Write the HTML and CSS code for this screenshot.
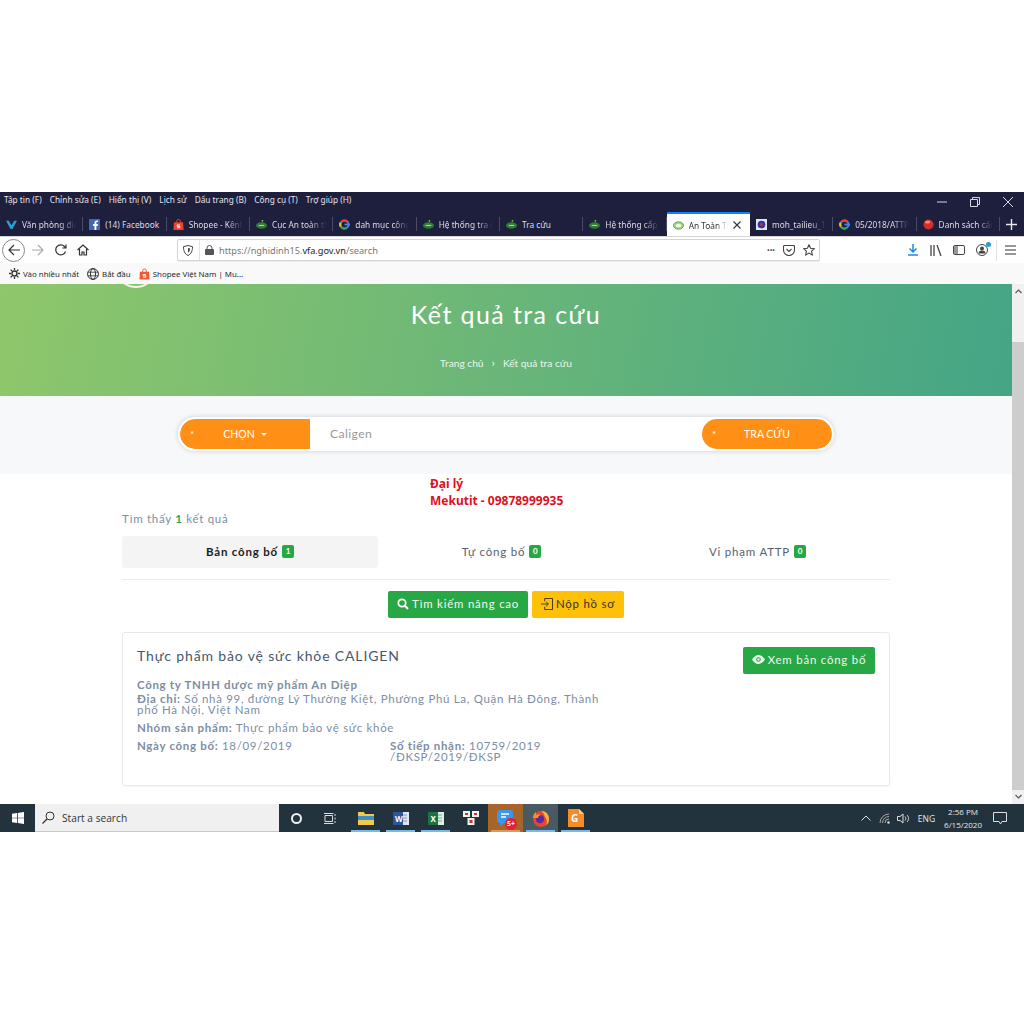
FILE: index.html
```html
<!DOCTYPE html>
<html lang="en">
<head>
    <meta charset="UTF-8">
    <meta name="viewport" content="width=device-width, initial-scale=1.0">
    <title>Kết quả tra cứu</title>
    <link rel="stylesheet" href="styles.css">
</head>
<body>
<div class="screen">
    <div class="menubar">
        <div class="menu-items">
            <span>Tập tin (F)</span><span>Chỉnh sửa (E)</span><span>Hiển thị (V)</span><span>Lịch sử</span><span>Dấu trang (B)</span><span>Công cụ (T)</span><span>Trợ giúp (H)</span>
        </div>
        <div class="win-btns">
            <svg width="10" height="10" viewBox="0 0 10 10"><path d="M0 5h10" stroke="#d8d8e0" fill="none"/></svg>
            <svg width="10" height="10" viewBox="0 0 10 10"><path d="M.5 2.5h7v7h-7zM2.5 2.5v-2h7v7h-2" stroke="#d8d8e0" fill="none"/></svg>
            <svg width="10" height="10" viewBox="0 0 10 10"><path d="M0 0l10 10M10 0L0 10" stroke="#d8d8e0" fill="none"/></svg>
        </div>
    </div>

    <div class="tabbar">
        <div class="tab"><svg class="fav" viewBox="0 0 12 12"><path d="M0 2h3l3 5 3-5h3L7 11H5z" fill="#2a9fd8"/></svg><span class="tab-text">Văn phòng điện tử</span></div>
        <div class="tab"><svg class="fav" viewBox="0 0 12 12"><rect width="12" height="12" fill="#4267b2"/><path d="M8 12V7.500h1.500l.3-2H8V4.300c0-.6.3-1 1-1h1V1.500H8.500C7 1.500 6 2.500 6 4v1.500H4.500v2H6V12z" fill="#fff"/></svg><span class="tab-text wide">(14) Facebook</span></div>
        <div class="tab"><svg class="fav" viewBox="0 0 12 12"><path d="M1 3.500h10l.5 8.500H.5z" fill="#e8442e"/><path d="M4 4V2.500a2 2 0 0 1 4 0V4" stroke="#e8442e" fill="none"/><path d="M4.500 9.500h3M7.500 6.500h-3v1.500h3v1.500" stroke="#fff" fill="none"/></svg><span class="tab-text">Shopee - Kênh người bán</span></div>
        <div class="tab"><svg class="fav" viewBox="0 0 12 12"><ellipse cx="6" cy="7" rx="6" ry="3.500" fill="#2e7d32"/><path d="M3 7h6" stroke="#c8e6a0"/><circle cx="7" cy="2" r="1" fill="#8bc34a"/></svg><span class="tab-text">Cục An toàn thực phẩm</span></div>
        <div class="tab"><svg class="fav" viewBox="0 0 12 12"><circle cx="6" cy="6" r="4.400" fill="none" stroke="#4285f4" stroke-width="2.200"/><path d="M9.600 3.400A4.400 4.400 0 0 0 2.500 3.400" fill="none" stroke="#ea4335" stroke-width="2.200"/><path d="M2 8.200a4.400 4.400 0 0 0 6 1.800" fill="none" stroke="#34a853" stroke-width="2.200"/><path d="M1.600 4a4.400 4.400 0 0 0 .3 4.200" fill="none" stroke="#fbbc05" stroke-width="2.200"/><path d="M6 6h6" stroke="#4285f4" stroke-width="2"/></svg><span class="tab-text">dah mục công bố</span></div>
        <div class="tab"><svg class="fav" viewBox="0 0 12 12"><ellipse cx="6" cy="7" rx="6" ry="3.500" fill="#2e7d32"/><path d="M3 7h6" stroke="#c8e6a0"/><circle cx="7" cy="2" r="1" fill="#8bc34a"/></svg><span class="tab-text">Hệ thống tra cứu</span></div>
        <div class="tab"><svg class="fav" viewBox="0 0 12 12"><ellipse cx="6" cy="7" rx="6" ry="3.500" fill="#2e7d32"/><path d="M3 7h6" stroke="#c8e6a0"/><circle cx="7" cy="2" r="1" fill="#8bc34a"/></svg><span class="tab-text plain">Tra cứu</span></div>
        <div class="tab"><svg class="fav" viewBox="0 0 12 12"><ellipse cx="6" cy="7" rx="6" ry="3.500" fill="#2e7d32"/><path d="M3 7h6" stroke="#c8e6a0"/><circle cx="7" cy="2" r="1" fill="#8bc34a"/></svg><span class="tab-text">Hệ thống cấp phép</span></div>
        <div class="tab active"><svg class="fav" viewBox="0 0 12 12"><ellipse cx="6" cy="6" rx="5.500" ry="4" fill="#a6d76a" stroke="#3aa76d"/><ellipse cx="6" cy="6" rx="3" ry="1.800" fill="#fff"/></svg><span class="tab-text short">An Toàn Thực Phẩm</span><svg class="tab-close" viewBox="0 0 8 8"><path d="M.5.5l7 7M7.500.5l-7 7" stroke="#333" stroke-width="1.100" fill="none"/></svg></div>
        <div class="tab"><svg class="fav" viewBox="0 0 12 12"><rect width="12" height="12" fill="#e4e4f2"/><circle cx="6" cy="6" r="4.200" fill="#2c3a9e"/><circle cx="6" cy="6" r="2" fill="#b03040"/></svg><span class="tab-text">moh_tailieu_1.pdf</span></div>
        <div class="tab"><svg class="fav" viewBox="0 0 12 12"><circle cx="6" cy="6" r="4.400" fill="none" stroke="#4285f4" stroke-width="2.200"/><path d="M9.600 3.400A4.400 4.400 0 0 0 2.500 3.400" fill="none" stroke="#ea4335" stroke-width="2.200"/><path d="M2 8.200a4.400 4.400 0 0 0 6 1.800" fill="none" stroke="#34a853" stroke-width="2.200"/><path d="M1.600 4a4.400 4.400 0 0 0 .3 4.200" fill="none" stroke="#fbbc05" stroke-width="2.200"/><path d="M6 6h6" stroke="#4285f4" stroke-width="2"/></svg><span class="tab-text">05/2018/ATTP-XNCB</span></div>
        <div class="tab"><svg class="fav" viewBox="0 0 12 12"><circle cx="6" cy="6" r="5.500" fill="#d32f2f"/><ellipse cx="5" cy="3.500" rx="3" ry="1.500" fill="#ef8a80"/></svg><span class="tab-text">Danh sách các sản</span></div>
        <div class="tab-new"><svg width="11" height="11" viewBox="0 0 11 11"><path d="M5.500 0v11M0 5.500h11" stroke="#e8e8f0" stroke-width="1.400" fill="none"/></svg></div>
    </div>

    <div class="toolbar">
        <div class="nav-back"><svg width="12" height="12" viewBox="0 0 12 12"><path d="M12 6H1M6 1L1 6l5 5" stroke="#333" stroke-width="1.200" fill="none"/></svg></div>
        <svg class="nav-fwd" width="12" height="12" viewBox="0 0 12 12"><path d="M0 6h11M6 1l5 5-5 5" stroke="#aaa" stroke-width="1.200" fill="none"/></svg>
        <svg class="nav-reload" width="12" height="12" viewBox="0 0 12 12"><path d="M10.500 7.500A5 5 0 1 1 9.500 2.500l1.500 1.500M11 .5V4H7.500" stroke="#333" stroke-width="1.200" fill="none"/></svg>
        <svg class="nav-home" width="12" height="12" viewBox="0 0 12 12"><path d="M.5 6L6 1l5.500 5M2.500 5v6h2.500V8h2v3h2.500V5" stroke="#333" stroke-width="1.200" fill="none"/></svg>
        <div class="urlbar">
            <svg class="url-shield" width="10" height="11" viewBox="0 0 10 11"><path d="M5 .5l4.500 1.200c0 4-1 7-4.500 8.800C1.500 8.700.5 5.700.5 1.700z" stroke="#444" fill="none"/><path d="M5 3l2 .6c0 2-.5 3.200-2 4.200z" fill="#444"/></svg>
            <span class="url-sep"></span>
            <svg class="url-lock" width="9" height="10" viewBox="0 0 9 10"><rect y="4" width="9" height="6" rx="1" fill="#555"/><path d="M2 4.500V3a2.500 2.500 0 0 1 5 0v1.500" stroke="#555" fill="none"/></svg>
            <span class="url-text">https://nghidinh15.<b>vfa.gov.vn</b>/search</span>
            <span class="url-dots">•••</span>
            <svg width="12" height="11" viewBox="0 0 12 11"><path d="M1.500.5h9a1 1 0 0 1 1 1V5a5.500 5.500 0 0 1-11 0V1.500a1 1 0 0 1 1-1zM3.500 4L6 6.500 8.500 4" stroke="#444" stroke-width="1.100" fill="none"/></svg>
            <svg width="12" height="12" viewBox="0 0 12 12"><path d="M6 .8l1.600 3.400 3.700.5-2.700 2.500.7 3.700L6 9.100l-3.300 1.800.7-3.700L.7 4.700l3.700-.5z" stroke="#444" stroke-width="1.100" fill="none"/></svg>
        </div>
        <div class="tool-right">
            <svg width="12" height="12" viewBox="0 0 12 12"><path d="M6 0v8M2.500 4.500L6 8l3.500-3.500M1 11h10" stroke="#1c8ae6" stroke-width="1.500" fill="none"/></svg>
            <svg width="12" height="11" viewBox="0 0 12 11"><path d="M1 0v11M4 0v11M7 0l4 11" stroke="#444" stroke-width="1.300" fill="none"/></svg>
            <svg width="12" height="10" viewBox="0 0 12 10"><rect x=".5" y=".5" width="11" height="9" rx="1.500" stroke="#444" fill="none"/><rect x="1" y="1" width="4" height="8" fill="#999"/></svg>
            <span class="account"><svg width="12" height="12" viewBox="0 0 12 12"><circle cx="6" cy="6" r="5.500" stroke="#444" fill="none"/><circle cx="6" cy="4.500" r="2" fill="#444"/><path d="M2.500 9.500a3.500 3 0 0 1 7 0z" fill="#444"/></svg><i class="account-dot"></i></span>
            <span class="tool-sep"></span>
            <svg width="11" height="10" viewBox="0 0 11 10"><path d="M0 1h11M0 5h11M0 9h11" stroke="#333" stroke-width="1.200" fill="none"/></svg>
        </div>
    </div>

    <div class="bookmarks">
        <span class="bm"><svg width="11" height="11" viewBox="0 0 11 11"><circle cx="5.500" cy="5.500" r="2.500" stroke="#333" stroke-width="1.400" fill="none"/><path d="M5.500 0v2M5.500 9v2M0 5.500h2M9 5.500h2M1.600 1.600L3 3M8 8l1.400 1.400M1.600 9.400L3 8M8 3l1.400-1.400" stroke="#333" stroke-width="1.300"/></svg>Vào nhiều nhất</span>
        <span class="bm"><svg width="12" height="12" viewBox="0 0 12 12"><circle cx="6" cy="6" r="5.400" stroke="#333" fill="none"/><ellipse cx="6" cy="6" rx="2.500" ry="5.400" stroke="#333" fill="none"/><path d="M.6 4.200h10.800M.6 7.800h10.800" stroke="#333" stroke-width=".8"/></svg>Bắt đầu</span>
        <span class="bm"><svg width="11" height="12" viewBox="0 0 12 12"><path d="M1 3.500h10l.5 8.500H.5z" fill="#ee5a35"/><path d="M4 4V2.500a2 2 0 0 1 4 0V4" stroke="#ee5a35" fill="none"/><path d="M4.500 9.500h3M7.500 6.500h-3v1.500h3v1.500" stroke="#fff" fill="none"/></svg>Shopee Việt Nam | Mu...</span>
    </div>

    <div class="viewport">
        <div class="page">
            <section class="hero">
                <div class="hero-logo"></div>
                <h1>Kết quả tra cứu</h1>
                <div class="crumbs"><span>Trang chủ</span><span class="crumb-sep">›</span><span>Kết quả tra cứu</span></div>
            </section>

            <section class="search-band">
                <div class="search-box">
                    <div class="search-select"><span class="star">*</span>CHỌN<i class="caret"></i></div>
                    <div class="search-input">Caligen</div>
                    <div class="search-btn"><span class="star">*</span>TRA CỨU</div>
                </div>
            </section>

            <section class="results">
                <div class="agent">Đại lý<br>Mekutit - 09878999935</div>
                <div class="found">Tìm thấy <b>1</b> kết quả</div>
                <div class="result-tabs">
                    <div class="rtab current">Bản công bố <span class="badge">1</span></div>
                    <div class="rtab">Tự công bố <span class="badge">0</span></div>
                    <div class="rtab">Vi phạm ATTP <span class="badge">0</span></div>
                </div>
                <div class="actions">
                    <a class="btn btn-green"><svg width="12" height="12" viewBox="0 0 12 12"><circle cx="5" cy="5" r="3.700" stroke="#fff" stroke-width="1.800" fill="none"/><path d="M7.800 7.800L11 11" stroke="#fff" stroke-width="2.200"/></svg>Tìm kiếm nâng cao</a>
                    <a class="btn btn-yellow"><svg width="12" height="12" viewBox="0 0 13 13"><path d="M4 3.500V.5h8.500v12H4v-3M0 6.500h8M5.500 4l2.500 2.500L5.500 9" stroke="#33302a" fill="none"/></svg>Nộp hồ sơ</a>
                </div>
                <article class="card">
                    <a class="btn btn-green card-btn"><svg width="13" height="9" viewBox="0 0 13 9"><path d="M0 4.500C2 1.500 4 0 6.500 0S11 1.500 13 4.500C11 7.500 9 9 6.500 9S2 7.500 0 4.500z" fill="#e8f5ea"/><circle cx="6.500" cy="4.500" r="2.300" fill="#28a745"/><circle cx="6.500" cy="4.500" r="1.200" fill="#e8f5ea"/></svg>Xem bản công bố</a>
                    <h2>Thực phẩm bảo vệ sức khỏe CALIGEN</h2>
                    <div class="info">
                        <p class="company">Công ty TNHH dược mỹ phẩm An Diệp</p>
                        <p class="addr"><b>Địa chỉ:</b> Số nhà 99, đường Lý Thường Kiệt, Phường Phú La, Quận Hà Đông, Thành phố Hà Nội, Việt Nam</p>
                        <p class="group"><b>Nhóm sản phẩm:</b> Thực phẩm bảo vệ sức khỏe</p>
                        <div class="meta">
                            <p><b>Ngày công bố:</b> 18/09/2019</p>
                            <p><b>Số tiếp nhận:</b> 10759/2019 /ĐKSP/2019/ĐKSP</p>
                        </div>
                    </div>
                </article>
            </section>
        </div>
        <div class="scrollbar">
            <svg class="sb-arrow" width="7" height="5" viewBox="0 0 7 5"><path d="M.5 4L3.500 1l3 3" stroke="#555" stroke-width="1.200" fill="none"/></svg>
            <div class="sb-track"><div class="sb-thumb"></div></div>
            <svg class="sb-arrow" width="7" height="5" viewBox="0 0 7 5"><path d="M.5 1l3 3 3-3" stroke="#555" stroke-width="1.200" fill="none"/></svg>
        </div>
    </div>

    <div class="taskbar">
        <div class="start"><svg width="12" height="12" viewBox="0 0 12 12"><path d="M0 1.700L5 1v4.700H0zM5.800.9L12 0v5.700H5.800zM0 6.300h5V11l-5-.7zM5.800 6.300H12V12l-6.200-.9z" fill="#fff"/></svg></div>
        <div class="task-search"><svg width="13" height="13" viewBox="0 0 13 13"><circle cx="8" cy="5" r="4" stroke="#333" fill="none"/><path d="M5 8l-4.500 4.500" stroke="#333" stroke-width="1.200"/></svg><span>Start a search</span></div>
        <div class="task-cortana"><i class="cortana-ring"></i></div>
        <div class="task-view"><svg width="12" height="11" viewBox="0 0 12 11"><path d="M1 2.500h7.500v6H1z" stroke="#ddd" fill="none"/><path d="M0 .5h9.500M0 10.500h9.500M11 1v2M11 4.500v2M11 8v2" stroke="#ddd" fill="none"/></svg></div>
        <div class="task-apps">
            <div class="app on"><svg width="16" height="14" viewBox="0 0 16 14"><path d="M0 1h6l1 2h9v11H0z" fill="#f2c94c"/><rect y="5" width="16" height="4" fill="#3b8fc4"/></svg></div>
            <div class="app on"><svg width="16" height="15" viewBox="0 0 16 15"><rect x="6" y="1" width="10" height="13" fill="#dfe6f2"/><path d="M8 4h6M8 7h6M8 10h6" stroke="#7d96c4"/><rect y="1" width="10" height="13" fill="#2b5797"/><text x="2" y="11" class="app-letter">W</text></svg></div>
            <div class="app on"><svg width="16" height="15" viewBox="0 0 16 15"><rect x="6" y="1" width="10" height="13" fill="#dcefe3"/><path d="M8 4h6M8 7h6M8 10h6" stroke="#6fb08a"/><rect y="1" width="10" height="13" fill="#1e7145"/><text x="2.500" y="11" class="app-letter">X</text></svg></div>
            <div class="app"><svg width="16" height="14" viewBox="0 0 16 14"><rect width="7" height="6" fill="#f2f2f2"/><rect x="9" width="7" height="6" fill="#f2f2f2"/><rect x="4.500" y="7" width="7" height="7" fill="#f2f2f2"/><rect x="2" y="2" width="3" height="2" fill="#c0392b"/><rect x="11" y="2" width="3" height="2" fill="#c0392b"/><rect x="6.500" y="9" width="3" height="3" fill="#c0392b"/></svg></div>
            <div class="app chat on"><svg width="18" height="18" viewBox="0 0 18 18"><path d="M3 1h10a3 3 0 0 1 3 3v7a3 3 0 0 1-3 3H7l-4 3v-3a3 3 0 0 1-3-3V4a3 3 0 0 1 3-3z" fill="#3a96f0"/><path d="M4 5h8M4 8h5" stroke="#fff" stroke-width="1.500"/></svg><span class="chat-badge">5+</span></div>
            <div class="app fox on"><svg width="18" height="18" viewBox="0 0 18 18"><circle cx="9" cy="10" r="8" fill="#e8442e"/><path d="M9 2c5 0 8 3.500 8 8 0 3-1 5-3 6 1.500-3 1-6-1-8-1-3-2-5-4-6z" fill="#fbb03b"/><circle cx="8" cy="10" r="4.200" fill="#5b2a9e"/><path d="M1 9c0-3 1.500-5 3-6v3c2-1 4-1 5 0-2 .5-3 1.500-3 3z" fill="#f78f2e"/></svg></div>
            <div class="app on"><svg width="17" height="18" viewBox="0 0 17 18"><path d="M1 0h11l5 5v13H1z" fill="#f48c28"/><path d="M12 0l5 5h-5z" fill="#fbd3a5"/><text x="4" y="13" class="app-letter big">G</text></svg></div>
        </div>
        <div class="tray">
            <svg class="tray-up" width="10" height="6" viewBox="0 0 10 6"><path d="M.5 5.500L5 1l4.500 4.500" stroke="#ddd" fill="none"/></svg>
            <svg width="11" height="11" viewBox="0 0 11 11"><path d="M1 10a9 9 0 0 1 9-9M3.500 10A6.500 6.500 0 0 1 10 3.500M6 10a4 4 0 0 1 4-4" stroke="#aaa" fill="none"/><circle cx="9.500" cy="9.500" r="1.200" fill="#ddd"/></svg>
            <svg width="12" height="11" viewBox="0 0 12 11"><path d="M.5 3.500H3L6 1v9L3 7.500H.5zM8 3.500c1 1 1 3 0 4M10 2c2 2 2 5 0 7" stroke="#ddd" fill="none"/></svg>
            <span class="tray-lang">ENG</span>
            <span class="clock">2:56 PM<br>6/15/2020</span>
            <svg class="notif" width="14" height="13" viewBox="0 0 14 13"><path d="M.5.500h13v9H9L7.500 12 6 9.500H.5z" stroke="#ddd" fill="none"/></svg>
        </div>
    </div>
</div>
</body>
</html>
```

FILE: styles.css
```css
* {
    box-sizing: border-box;
}
body {
    margin: 0;
    padding-top: 192px;
    height: 1024px;
    overflow: hidden;
    background: #fff;
    font-family: "Noto Sans", "Liberation Sans", sans-serif;
}
.screen {
    height: 640px;
    display: flex;
    flex-direction: column;
}

/* browser chrome */
.menubar {
    height: 20px;
    flex: none;
    background: #1d1f3d;
    display: flex;
    justify-content: space-between;
    align-items: center;
    color: #e4e4ec;
    font-size: 8.3px;
}
.menu-items {
    display: flex;
    gap: 8px;
    padding: 0 0 5px 4px;
}
.win-btns {
    display: flex;
    gap: 23px;
    padding-right: 11px;
}
.tabbar {
    height: 24px;
    flex: none;
    background: #1d1f3d;
    display: flex;
    color: #dcdce6;
    font-size: 8.3px;
}
.tab {
    width: 83.33px;
    display: flex;
    align-items: center;
    padding-left: 6px;
    gap: 5px;
    position: relative;
    overflow: hidden;
    white-space: nowrap;
}
.tab::after {
    content: "";
    position: absolute;
    right: 0;
    top: 5px;
    bottom: 5px;
    width: 1px;
    background: #4a4c68;
}
.tab.active {
    background: #fff;
    color: #333;
    border-top: 2px solid #0a84ff;
}
.tab.active::after {
    display: none;
}
.tab-text {
    display: block;
    width: 54px;
    overflow: hidden;
    -webkit-mask-image: linear-gradient(to right, #000 70%, transparent);
    mask-image: linear-gradient(to right, #000 70%, transparent);
}
.tab-text.wide {
    width: 60px;
    -webkit-mask-image: none;
    mask-image: none;
}
.tab-text.plain {
    -webkit-mask-image: none;
    mask-image: none;
}
.tab-text.short {
    width: 39px;
}
.fav {
    width: 11px;
    height: 11px;
    flex: none;
}
.tab-close {
    width: 8px;
    height: 8px;
    flex: none;
}
.tab-new {
    flex: 1;
    display: flex;
    align-items: center;
    justify-content: center;
}
.toolbar {
    height: 27px;
    flex: none;
    background: #fff;
    border-top: 1px solid #d5d5d8;
    display: flex;
    align-items: center;
    padding-left: 2px;
}
.nav-back {
    width: 23px;
    height: 23px;
    border: 1px solid #888;
    border-radius: 50%;
    display: flex;
    align-items: center;
    justify-content: center;
}
.nav-fwd {
    margin-left: 7px;
}
.nav-reload {
    margin-left: 11px;
}
.nav-home {
    margin-left: 10px;
}
.urlbar {
    width: 643px;
    height: 22px;
    margin-left: 88px;
    background: #fff;
    border: 1px solid #d4d4d4;
    border-radius: 2px;
    box-shadow: 0 1px 1px #e8e8e8;
    display: flex;
    align-items: center;
    padding: 0 4px 0 5px;
    gap: 8px;
    font-size: 9.2px;
    color: #777;
}
.url-sep {
    width: 1px;
    height: 20px;
    background: #e4e4e4;
    margin-left: -2px;
    margin-right: -3px;
}
.url-text {
    flex: 1;
    margin-left: -3px;
}
.url-text b {
    font-weight: 400;
    color: #222;
}
.url-dots {
    font-size: 7px;
    color: #444;
    letter-spacing: 0;
}
.tool-right {
    display: flex;
    align-items: center;
    margin-left: 87px;
    gap: 11px;
    flex: 1;
}
.account {
    position: relative;
    display: flex;
}
.account-dot {
    position: absolute;
    top: -2px;
    right: -3px;
    width: 5px;
    height: 5px;
    border-radius: 50%;
    background: #1f9be0;
}
.tool-sep {
    width: 1px;
    height: 21px;
    background: #e2e2e2;
    margin: 0 -3px 0 -3px;
}
.bookmarks {
    height: 21px;
    flex: none;
    background: #f9f9fa;
    display: flex;
    align-items: center;
    padding-left: 9px;
    gap: 8px;
    font-size: 7.9px;
    color: #2a2a2e;
}
.bm {
    display: flex;
    align-items: center;
    gap: 3px;
}

/* page */
.viewport {
    flex: 1;
    min-height: 0;
    display: flex;
    overflow: hidden;
}
.page {
    flex: 1;
    min-width: 0;
    font-family: Lato, "Noto Sans", sans-serif;
    color: #7c8ea3;
}
.hero {
    height: 112px;
    background: linear-gradient(100deg, #8fc76b 0%, #44a586 100%);
    color: #fff;
    text-align: center;
    padding-top: 12px;
    position: relative;
    overflow: hidden;
}
.hero-logo {
    position: absolute;
    left: 115px;
    top: -38px;
    width: 42px;
    height: 42px;
    border-radius: 50%;
    border: 2px solid #eef6e8;
}
.hero h1 {
    margin: 0;
    font-size: 25px;
    font-weight: 400;
    letter-spacing: 1.4px;
    line-height: 36px;
}
.crumbs {
    margin-top: 24px;
    font-size: 10.2px;
    line-height: 14px;
    display: flex;
    justify-content: center;
    gap: 8px;
    color: #eaf5ea;
}
.crumb-sep {
    font-size: 12px;
}
.search-band {
    height: 78px;
    background: #f6f8fa;
    padding: 21px 0 0 178px;
}
.search-box {
    width: 656px;
    height: 34px;
    border: 2px solid #fff;
    border-radius: 17px;
    background: #fff;
    box-shadow: 0 0 5px rgba(60, 70, 90, 0.22);
    display: flex;
    align-items: stretch;
    font-size: 10.5px;
    overflow: hidden;
}
.search-select {
    width: 130px;
    background: #ff9015;
    color: #fff;
    border-radius: 15px 0 0 15px;
    display: flex;
    align-items: center;
    justify-content: center;
    position: relative;
}
.star {
    position: absolute;
    left: 10px;
    top: 10px;
    font-size: 10px;
    line-height: 10px;
}
.caret {
    width: 0;
    height: 0;
    margin-left: 6px;
    border-left: 3px solid transparent;
    border-right: 3px solid transparent;
    border-top: 3px solid #fff;
}
.search-input {
    flex: 1;
    padding: 0 0 2px 20px;
    display: flex;
    align-items: center;
    font-size: 12.2px;
    color: #999;
    letter-spacing: 0.4px;
}
.search-btn {
    width: 130px;
    background: #ff9015;
    color: #fff;
    border-radius: 15px;
    display: flex;
    align-items: center;
    justify-content: center;
    position: relative;
}
.results {
    width: 768px;
    margin-left: 122px;
    position: relative;
}
.agent {
    padding-left: 308px;
    padding-top: 1px;
    font-family: "Noto Sans", sans-serif;
    font-size: 12px;
    font-weight: 700;
    line-height: 17px;
    color: #e0101c;
}
.found {
    margin-top: 2px;
    font-size: 11.5px;
    line-height: 16px;
    letter-spacing: 0.7px;
}
.found b {
    color: #28a745;
}
.result-tabs {
    margin-top: 9px;
    display: grid;
    grid-template-columns: repeat(3, 1fr);
    height: 44px;
    padding-bottom: 11px;
    border-bottom: 1px solid #e9ecef;
    font-size: 11.5px;
    letter-spacing: 0.8px;
    color: #56616e;
}
.rtab {
    display: flex;
    align-items: center;
    justify-content: center;
    gap: 4px;
    border-radius: 3px;
    padding: 0 9px 2px 0;
}
.rtab.current {
    background: #f4f4f4;
    color: #1c1c1c;
    font-weight: 700;
    padding-right: 0;
}
.badge {
    background: #28a745;
    color: #fff;
    font-size: 8px;
    font-weight: 700;
    width: 12px;
    height: 13px;
    border-radius: 2px;
    display: flex;
    align-items: center;
    justify-content: center;
    letter-spacing: 0;
}
.actions {
    margin-top: 11px;
    display: flex;
    justify-content: center;
    gap: 4px;
}
.btn {
    height: 27px;
    display: inline-flex;
    align-items: center;
    justify-content: center;
    gap: 3px;
    border-radius: 2px;
    font-size: 11.4px;
    letter-spacing: 0.8px;
    padding-bottom: 2px;
}
.btn-green {
    width: 140px;
    background: #28a745;
    color: #f2f8f3;
}
.btn-yellow {
    width: 92px;
    background: #ffc107;
    color: #33302a;
}
.card {
    margin-top: 14px;
    height: 154px;
    border: 1px solid #e6e8ea;
    border-radius: 3px;
    box-shadow: 0 1px 2px rgba(0, 0, 0, 0.05);
    padding: 12px 14px;
    position: relative;
}
.card-btn {
    position: absolute;
    top: 14px;
    right: 14px;
    width: 132px;
}
.card h2 {
    margin: 0;
    font-size: 14px;
    font-weight: 400;
    line-height: 22px;
    letter-spacing: 0.85px;
    color: #46586c;
}
.info {
    margin-top: 12px;
    width: 475px;
    font-size: 11.5px;
    line-height: 11px;
    letter-spacing: 0.68px;
}
.info p {
    margin: 0;
}
.info b {
    font-weight: 700;
}
.company {
    font-weight: 700;
}
.info .addr {
    margin-top: 3px;
}
.info .group {
    margin-top: 7px;
}
.meta {
    margin-top: 7px;
    display: grid;
    grid-template-columns: 253px 160px;
}
.scrollbar {
    width: 12px;
    flex: none;
    background: #f0f0f0;
    display: flex;
    flex-direction: column;
    align-items: center;
    padding: 5px 0 5px;
    gap: 4px;
}
.sb-track {
    flex: 1;
    width: 100%;
    padding-top: 44px;
}
.sb-thumb {
    height: 100%;
    background: #cdcdcd;
}

/* windows taskbar */
.taskbar {
    height: 28px;
    flex: none;
    background: #22333d;
    display: flex;
    align-items: center;
    color: #e8e8e8;
}
.start {
    width: 35px;
    display: flex;
    justify-content: center;
}
.task-search {
    width: 244px;
    height: 28px;
    background: #f0f0f0;
    border-bottom: 1px solid #c8c8c8;
    color: #333;
    display: flex;
    align-items: center;
    gap: 7px;
    padding-left: 7px;
    font-size: 10.2px;
    font-family: "Open Sans", sans-serif;
}
.task-cortana {
    width: 34px;
    display: flex;
    justify-content: center;
}
.cortana-ring {
    width: 11px;
    height: 11px;
    border: 2px solid #eee;
    border-radius: 50%;
}
.task-view {
    width: 34px;
    display: flex;
    justify-content: center;
}
.task-apps {
    display: flex;
    margin-left: 1px;
}
.app {
    width: 35px;
    height: 28px;
    display: flex;
    align-items: center;
    justify-content: center;
    position: relative;
}
.app.on::after {
    content: "";
    position: absolute;
    left: 3px;
    right: 3px;
    bottom: 0;
    height: 2px;
    background: #76b9ed;
}
.app.chat {
    background: #a8652a;
}
.app.chat::after {
    background: #d99a5a;
}
.app.fox {
    background: #4a5a63;
}
.chat-badge {
    position: absolute;
    right: 6px;
    bottom: 2px;
    width: 12px;
    height: 12px;
    border-radius: 50%;
    background: #e0232e;
    color: #fff;
    font-size: 7px;
    font-weight: 700;
    line-height: 12px;
    text-align: center;
}
.app-letter {
    font-size: 8px;
    font-weight: 700;
    fill: #fff;
}
.app-letter.big {
    font-size: 10px;
}
.tray {
    margin-left: auto;
    display: flex;
    align-items: center;
    gap: 7px;
    padding-right: 17px;
    font-size: 8px;
    font-family: "Open Sans", sans-serif;
}
.tray-up {
    margin-right: 1px;
}
.tray-lang {
    margin-left: 2px;
    font-size: 8.5px;
}
.clock {
    margin-left: 2px;
    text-align: center;
    line-height: 13px;
}
.notif {
    margin-left: 4px;
}
```
